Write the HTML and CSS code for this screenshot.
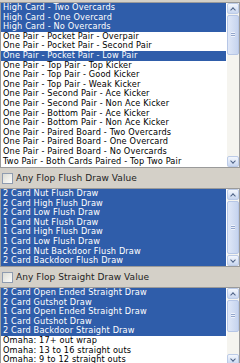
FILE: index.html
```html
<!DOCTYPE html>
<html lang="en">
  <head>
    <meta charset="UTF-8" />
    <title>Flop Filters</title>
    <link rel="stylesheet" href="styles.css">
  </head>
  <body>
    <!-- Made Hands -->
    <div class="listbox hands">
      <div class="items">
        <div class="item sel">High Card - Two Overcards</div>
        <div class="item sel">High Card - One Overcard</div>
        <div class="item sel">High Card - No Overcards</div>
        <div class="item">One Pair - Pocket Pair - Overpair</div>
        <div class="item">One Pair - Pocket Pair - Second Pair</div>
        <div class="item sel">One Pair - Pocket Pair - Low Pair</div>
        <div class="item">One Pair - Top Pair - Top Kicker</div>
        <div class="item">One Pair - Top Pair - Good Kicker</div>
        <div class="item">One Pair - Top Pair - Weak Kicker</div>
        <div class="item">One Pair - Second Pair - Ace Kicker</div>
        <div class="item">One Pair - Second Pair - Non Ace Kicker</div>
        <div class="item">One Pair - Bottom Pair - Ace Kicker</div>
        <div class="item">One Pair - Bottom Pair - Non Ace Kicker</div>
        <div class="item">One Pair - Paired Board - Two Overcards</div>
        <div class="item">One Pair - Paired Board - One Overcard</div>
        <div class="item">One Pair - Paired Board - No Overcards</div>
        <div class="item">Two Pair - Both Cards Paired - Top Two Pair</div>
      </div>
      <div class="scroll">
        <div class="arrow up"></div>
        <div class="track"><div class="thumb"></div></div>
        <div class="arrow down"></div>
      </div>
    </div>

    <!-- Flush Draws -->
    <label class="check"><span class="box"></span>Any Flop Flush Draw Value</label>
    <div class="listbox flush">
      <div class="items">
        <div class="item sel">2 Card Nut Flush Draw</div>
        <div class="item sel">2 Card High Flush Draw</div>
        <div class="item sel">2 Card Low Flush Draw</div>
        <div class="item sel">1 Card Nut Flush Draw</div>
        <div class="item sel">1 Card High Flush Draw</div>
        <div class="item sel">1 Card Low Flush Draw</div>
        <div class="item sel">2 Card Nut Backdoor Flush Draw</div>
        <div class="item sel">2 Card Backdoor Flush Draw</div>
      </div>
      <div class="scroll">
        <div class="arrow up"></div>
        <div class="track"><div class="thumb"></div></div>
        <div class="arrow down"></div>
      </div>
    </div>

    <!-- Straight Draws -->
    <label class="check"><span class="box"></span>Any Flop Straight Draw Value</label>
    <div class="listbox straight">
      <div class="items">
        <div class="item sel">2 Card Open Ended Straight Draw</div>
        <div class="item sel">2 Card Gutshot Draw</div>
        <div class="item sel">1 Card Open Ended Straight Draw</div>
        <div class="item sel">1 Card Gutshot Draw</div>
        <div class="item sel">2 Card Backdoor Straight Draw</div>
        <div class="item">Omaha: 17+ out wrap</div>
        <div class="item">Omaha: 13 to 16 straight outs</div>
        <div class="item">Omaha: 9 to 12 straight outs</div>
      </div>
      <div class="scroll">
        <div class="arrow up"></div>
        <div class="track"><div class="thumb"></div></div>
        <div class="arrow down"></div>
      </div>
    </div>
  </body>
</html>
```

FILE: styles.css
```css
/* General */
body {
  margin: 0;
  padding: 2px 0 0;
  background: #d4d0c8;
  font-family: "DejaVu Sans", sans-serif;
  overflow: hidden;
}

/* List boxes */
.listbox {
  display: flex;
  border: 1px solid #9a9a9a;
  background: #fff;
  overflow: hidden;
}

.hands { height: 164px; }
.flush { height: 77px; }
.straight { height: 77px; }

.items {
  flex: 1;
  overflow: hidden;
}

.item {
  height: 9.6px;
  line-height: 9.6px;
  padding-left: 2px;
  font-size: 8.2px;
  letter-spacing: 0.15px;
  color: #000;
  white-space: nowrap;
}

.item.sel {
  background: #2f5daa;
  color: #fff;
}

/* XP scrollbar */
.scroll {
  width: 12px;
  display: flex;
  flex-direction: column;
  background: #f5f4ef;
  border-left: 1px solid #fff;
}

.arrow {
  height: 11px;
  position: relative;
  background: linear-gradient(#f4f7fd, #c8d6f0);
  border: 1px solid #bccbe7;
  border-radius: 2px;
  box-sizing: border-box;
}

.arrow::after {
  content: "";
  position: absolute;
  left: 3px;
  width: 3px;
  height: 3px;
  border-left: 1.5px solid #4d6185;
  border-top: 1.5px solid #4d6185;
}

.arrow.up::after {
  top: 4px;
  transform: rotate(45deg);
}

.arrow.down::after {
  top: 2px;
  transform: rotate(-135deg);
}

.track {
  flex: 1;
  display: flex;
  flex-direction: column;
  padding: 1px 0;
}

.thumb {
  position: relative;
  background: linear-gradient(90deg, #dfe7f7, #c6d4ef);
  border: 1px solid #b6c6e6;
  border-radius: 2px;
}

.thumb::after {
  content: "";
  position: absolute;
  left: 3px;
  right: 3px;
  top: 50%;
  height: 5px;
  margin-top: -3px;
  background: repeating-linear-gradient(#eef2fb 0 1px, #93a6cc 1px 2px);
}

.hands .thumb { height: 38px; }
.flush .thumb { flex: 1; }
.straight .thumb { height: 30px; }

/* Checkbox rows */
.check {
  display: flex;
  align-items: center;
  height: 20px;
  padding-left: 2px;
  font-size: 9px;
  letter-spacing: 0.05px;
  color: #222;
}

.box {
  width: 9px;
  height: 9px;
  margin-right: 3px;
  border: 1px solid #8f9cb0;
  background: linear-gradient(135deg, #dcdcd4, #fdfdfb);
}
```
